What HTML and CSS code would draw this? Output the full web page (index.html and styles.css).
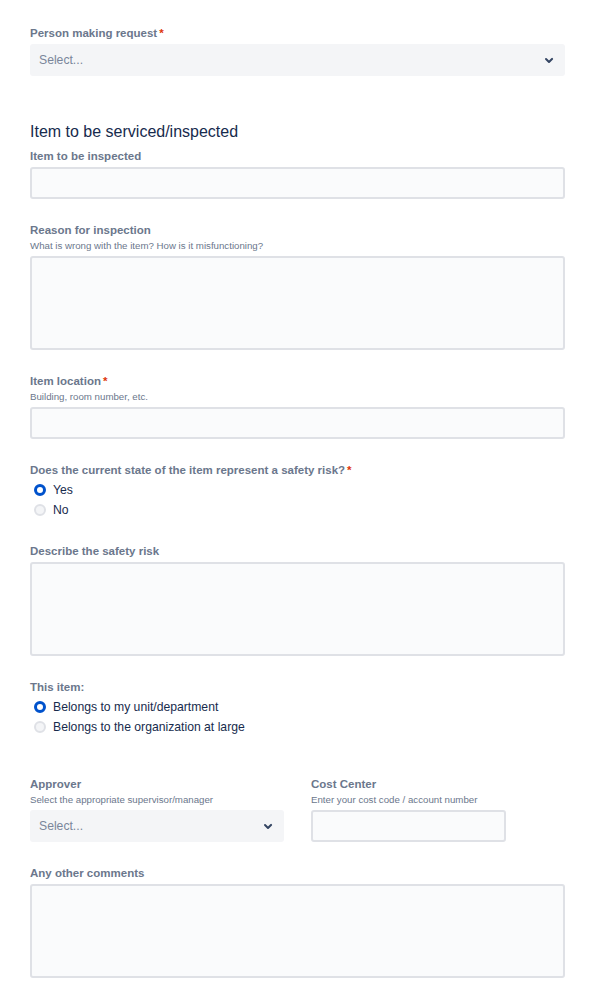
FILE: index.html
```html
<!DOCTYPE html>
<html>
<head>
<meta charset="utf-8">
<link rel="stylesheet" href="styles.css">
</head>
<body>
<form class="form">
  <div class="field first">
    <div class="label">Person making request<span class="req">*</span></div>
    <div class="select">
      <span class="placeholder">Select...</span>
      <svg class="chev" width="24" height="24" viewBox="0 0 24 24"><path d="M8.3 10.3a1 1 0 0 1 1.4 0L12 12.6l2.3-2.3a1 1 0 1 1 1.4 1.4l-3 3a1 1 0 0 1-1.4 0l-3-3a1 1 0 0 1 0-1.4z" fill="#344563"/></svg>
    </div>
  </div>

  <h2 class="section">Item to be serviced/inspected</h2>

  <div class="field tight">
    <div class="label">Item to be inspected</div>
    <div class="input"></div>
  </div>

  <div class="field">
    <div class="label">Reason for inspection</div>
    <div class="help">What is wrong with the item? How is it misfunctioning?</div>
    <div class="input area"></div>
  </div>

  <div class="field">
    <div class="label">Item location<span class="req">*</span></div>
    <div class="help">Building, room number, etc.</div>
    <div class="input"></div>
  </div>

  <div class="field">
    <div class="label">Does the current state of the item represent a safety risk?<span class="req">*</span></div>
    <div class="radios">
      <div class="radio"><span class="dot on"></span>Yes</div>
      <div class="radio"><span class="dot"></span>No</div>
    </div>
  </div>

  <div class="field">
    <div class="label">Describe the safety risk</div>
    <div class="input area"></div>
  </div>

  <div class="field">
    <div class="label">This item:</div>
    <div class="radios">
      <div class="radio"><span class="dot on"></span>Belongs to my unit/department</div>
      <div class="radio"><span class="dot"></span>Belongs to the organization at large</div>
    </div>
  </div>

  <div class="row">
    <div class="col left">
      <div class="label">Approver</div>
      <div class="help">Select the appropriate supervisor/manager</div>
      <div class="select">
        <span class="placeholder">Select...</span>
        <svg class="chev" width="24" height="24" viewBox="0 0 24 24"><path d="M8.3 10.3a1 1 0 0 1 1.4 0L12 12.6l2.3-2.3a1 1 0 1 1 1.4 1.4l-3 3a1 1 0 0 1-1.4 0l-3-3a1 1 0 0 1 0-1.4z" fill="#344563"/></svg>
      </div>
    </div>
    <div class="col right">
      <div class="label">Cost Center</div>
      <div class="help">Enter your cost code / account number</div>
      <div class="input"></div>
    </div>
  </div>

  <div class="field">
    <div class="label">Any other comments</div>
    <div class="input area"></div>
  </div>
</form>
</body>
</html>
```

FILE: styles.css
```css
* { box-sizing: border-box; }
html, body { margin: 0; padding: 0; background: #fff; }
body {
  font-family: "Liberation Sans", Arial, sans-serif;
  color: #172B4D;
}
.form {
  width: 535px;
  margin-left: 30px;
  padding-top: 25px;
  padding-bottom: 20px;
}
.field { margin-top: 23px; }
.field.first { margin-top: 0; }
.field.tight { margin-top: 6px; }
.label {
  font-size: 11.5px;
  font-weight: 700;
  line-height: 16px;
  color: #6B778C;
  margin-bottom: 3px;
}
.req {
  color: #DE350B;
  margin-left: 2px;
}
.help {
  font-size: 9.7px;
  line-height: 14px;
  color: #6B778C;
  margin-top: -2px;
  margin-bottom: 3px;
}
.select {
  height: 32px;
  background: #F4F5F7;
  border-radius: 3px;
  display: flex;
  align-items: center;
  justify-content: space-between;
  padding: 0 4px 0 9px;
}
.placeholder {
  font-size: 12.2px;
  color: #7A869A;
}
.chev { display: block; }
.input {
  height: 32px;
  background: #FAFBFC;
  border: 2px solid #DFE1E6;
  border-radius: 3px;
}
.input.area { height: 94px; }
.section {
  margin: 46px 0 0 0;
  font-size: 16px;
  line-height: 20px;
  font-weight: 400;
  color: #172B4D;
}
.radios { margin-top: -1px; }
.radio {
  display: flex;
  align-items: center;
  height: 20px;
  font-size: 12.2px;
  color: #172B4D;
}
.dot {
  width: 12px;
  height: 12px;
  border-radius: 50%;
  background: #F4F5F7;
  border: 2px solid #DFE1E6;
  margin: 0 7px 0 4px;
  flex: none;
}
.dot.on {
  background: #fff;
  border: 3.5px solid #0052CC;
}
.row {
  display: flex;
  gap: 27px;
  margin-top: 39px;
}
.col.left { width: 254px; }
.col.right { width: 195px; }
```
